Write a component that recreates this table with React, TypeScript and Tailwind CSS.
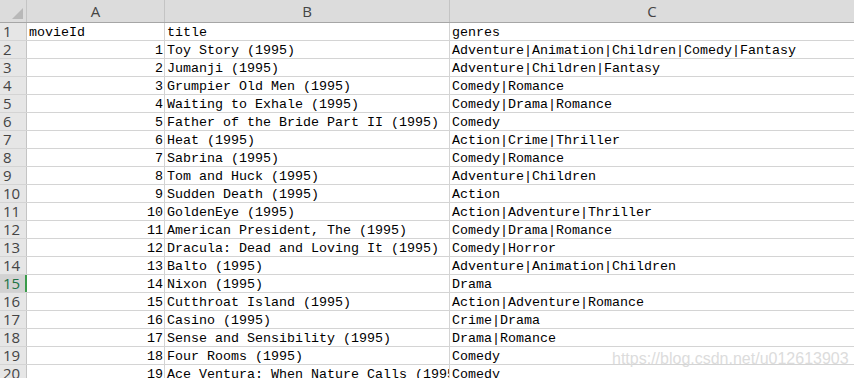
import React from 'react';

const rows: [string, string, string][] = [
  ['movieId', 'title', 'genres'],
  ['1', 'Toy Story (1995)', 'Adventure|Animation|Children|Comedy|Fantasy'],
  ['2', 'Jumanji (1995)', 'Adventure|Children|Fantasy'],
  ['3', 'Grumpier Old Men (1995)', 'Comedy|Romance'],
  ['4', 'Waiting to Exhale (1995)', 'Comedy|Drama|Romance'],
  ['5', 'Father of the Bride Part II (1995)', 'Comedy'],
  ['6', 'Heat (1995)', 'Action|Crime|Thriller'],
  ['7', 'Sabrina (1995)', 'Comedy|Romance'],
  ['8', 'Tom and Huck (1995)', 'Adventure|Children'],
  ['9', 'Sudden Death (1995)', 'Action'],
  ['10', 'GoldenEye (1995)', 'Action|Adventure|Thriller'],
  ['11', 'American President, The (1995)', 'Comedy|Drama|Romance'],
  ['12', 'Dracula: Dead and Loving It (1995)', 'Comedy|Horror'],
  ['13', 'Balto (1995)', 'Adventure|Animation|Children'],
  ['14', 'Nixon (1995)', 'Drama'],
  ['15', 'Cutthroat Island (1995)', 'Action|Adventure|Romance'],
  ['16', 'Casino (1995)', 'Crime|Drama'],
  ['17', 'Sense and Sensibility (1995)', 'Drama|Romance'],
  ['18', 'Four Rooms (1995)', 'Comedy'],
  ['19', 'Ace Ventura: When Nature Calls (1995)', 'Comedy'],
];

const mono = { fontFamily: '"Liberation Mono", monospace' };

export default function App() {
  return (
    <div className="relative w-[854px] h-[378px] overflow-hidden bg-white">
      {/* column headers */}
      <div className="flex h-[23px] bg-[#dcdcdc] border-b border-[#a6a6a6] text-[#444] text-[15px] font-['Open_Sans',sans-serif]">
        <div className="w-[27px] shrink-0 border-r border-[#c4c4c4] flex items-end justify-end pr-[3px] pb-[3px]">
          <svg width="11" height="11" viewBox="0 0 11 11">
            <polygon points="11,0 11,11 0,11" fill="#b8b8b8" />
          </svg>
        </div>
        <div className="w-[138px] shrink-0 border-r border-[#c4c4c4] flex items-center justify-center">A</div>
        <div className="w-[285px] shrink-0 border-r border-[#c4c4c4] flex items-center justify-center">B</div>
        <div className="w-[404px] shrink-0 flex items-center justify-center">C</div>
      </div>

      {rows.map((r, i) => {
        const n = i + 1;
        const sel = n === 15;
        return (
          <div key={n} className="flex h-[18px] border-b border-[#d4d4d4]">
            <div
              className={`w-[27px] shrink-0 pl-[3px] text-[15px] leading-[17px] font-['Open_Sans',sans-serif] ${
                sel
                  ? 'bg-[#d2d2d2] text-[#217346] border-r-2 border-[#3a9b4a]'
                  : 'bg-[#e6e6e6] text-[#444] border-r border-[#c4c4c4]'
              }`}
            >
              {n}
            </div>
            <div
              className={`w-[138px] shrink-0 border-r border-[#d4d4d4] overflow-hidden whitespace-nowrap pt-[2px] text-[13.33px] leading-[15px] text-black pr-[1px] ${
                n === 1 ? 'text-left pl-[2px]' : 'text-right'
              }`}
              style={mono}
            >
              {r[0]}
            </div>
            <div
              className="w-[285px] shrink-0 border-r border-[#d4d4d4] overflow-hidden whitespace-nowrap pt-[2px] text-[13.33px] leading-[15px] text-black pl-[2px]"
              style={mono}
            >
              {r[1]}
            </div>
            <div
              className="w-[404px] shrink-0 overflow-hidden whitespace-nowrap pt-[2px] text-[13.33px] leading-[15px] text-black pl-[2px]"
              style={mono}
            >
              {r[2]}
            </div>
          </div>
        );
      })}

      <div className="absolute left-[612px] top-[347px] text-[16px] text-[#dcdcdc] font-['Liberation_Sans',sans-serif] whitespace-nowrap">
        https://blog.csdn.net/u012613903
      </div>
    </div>
  );
}
